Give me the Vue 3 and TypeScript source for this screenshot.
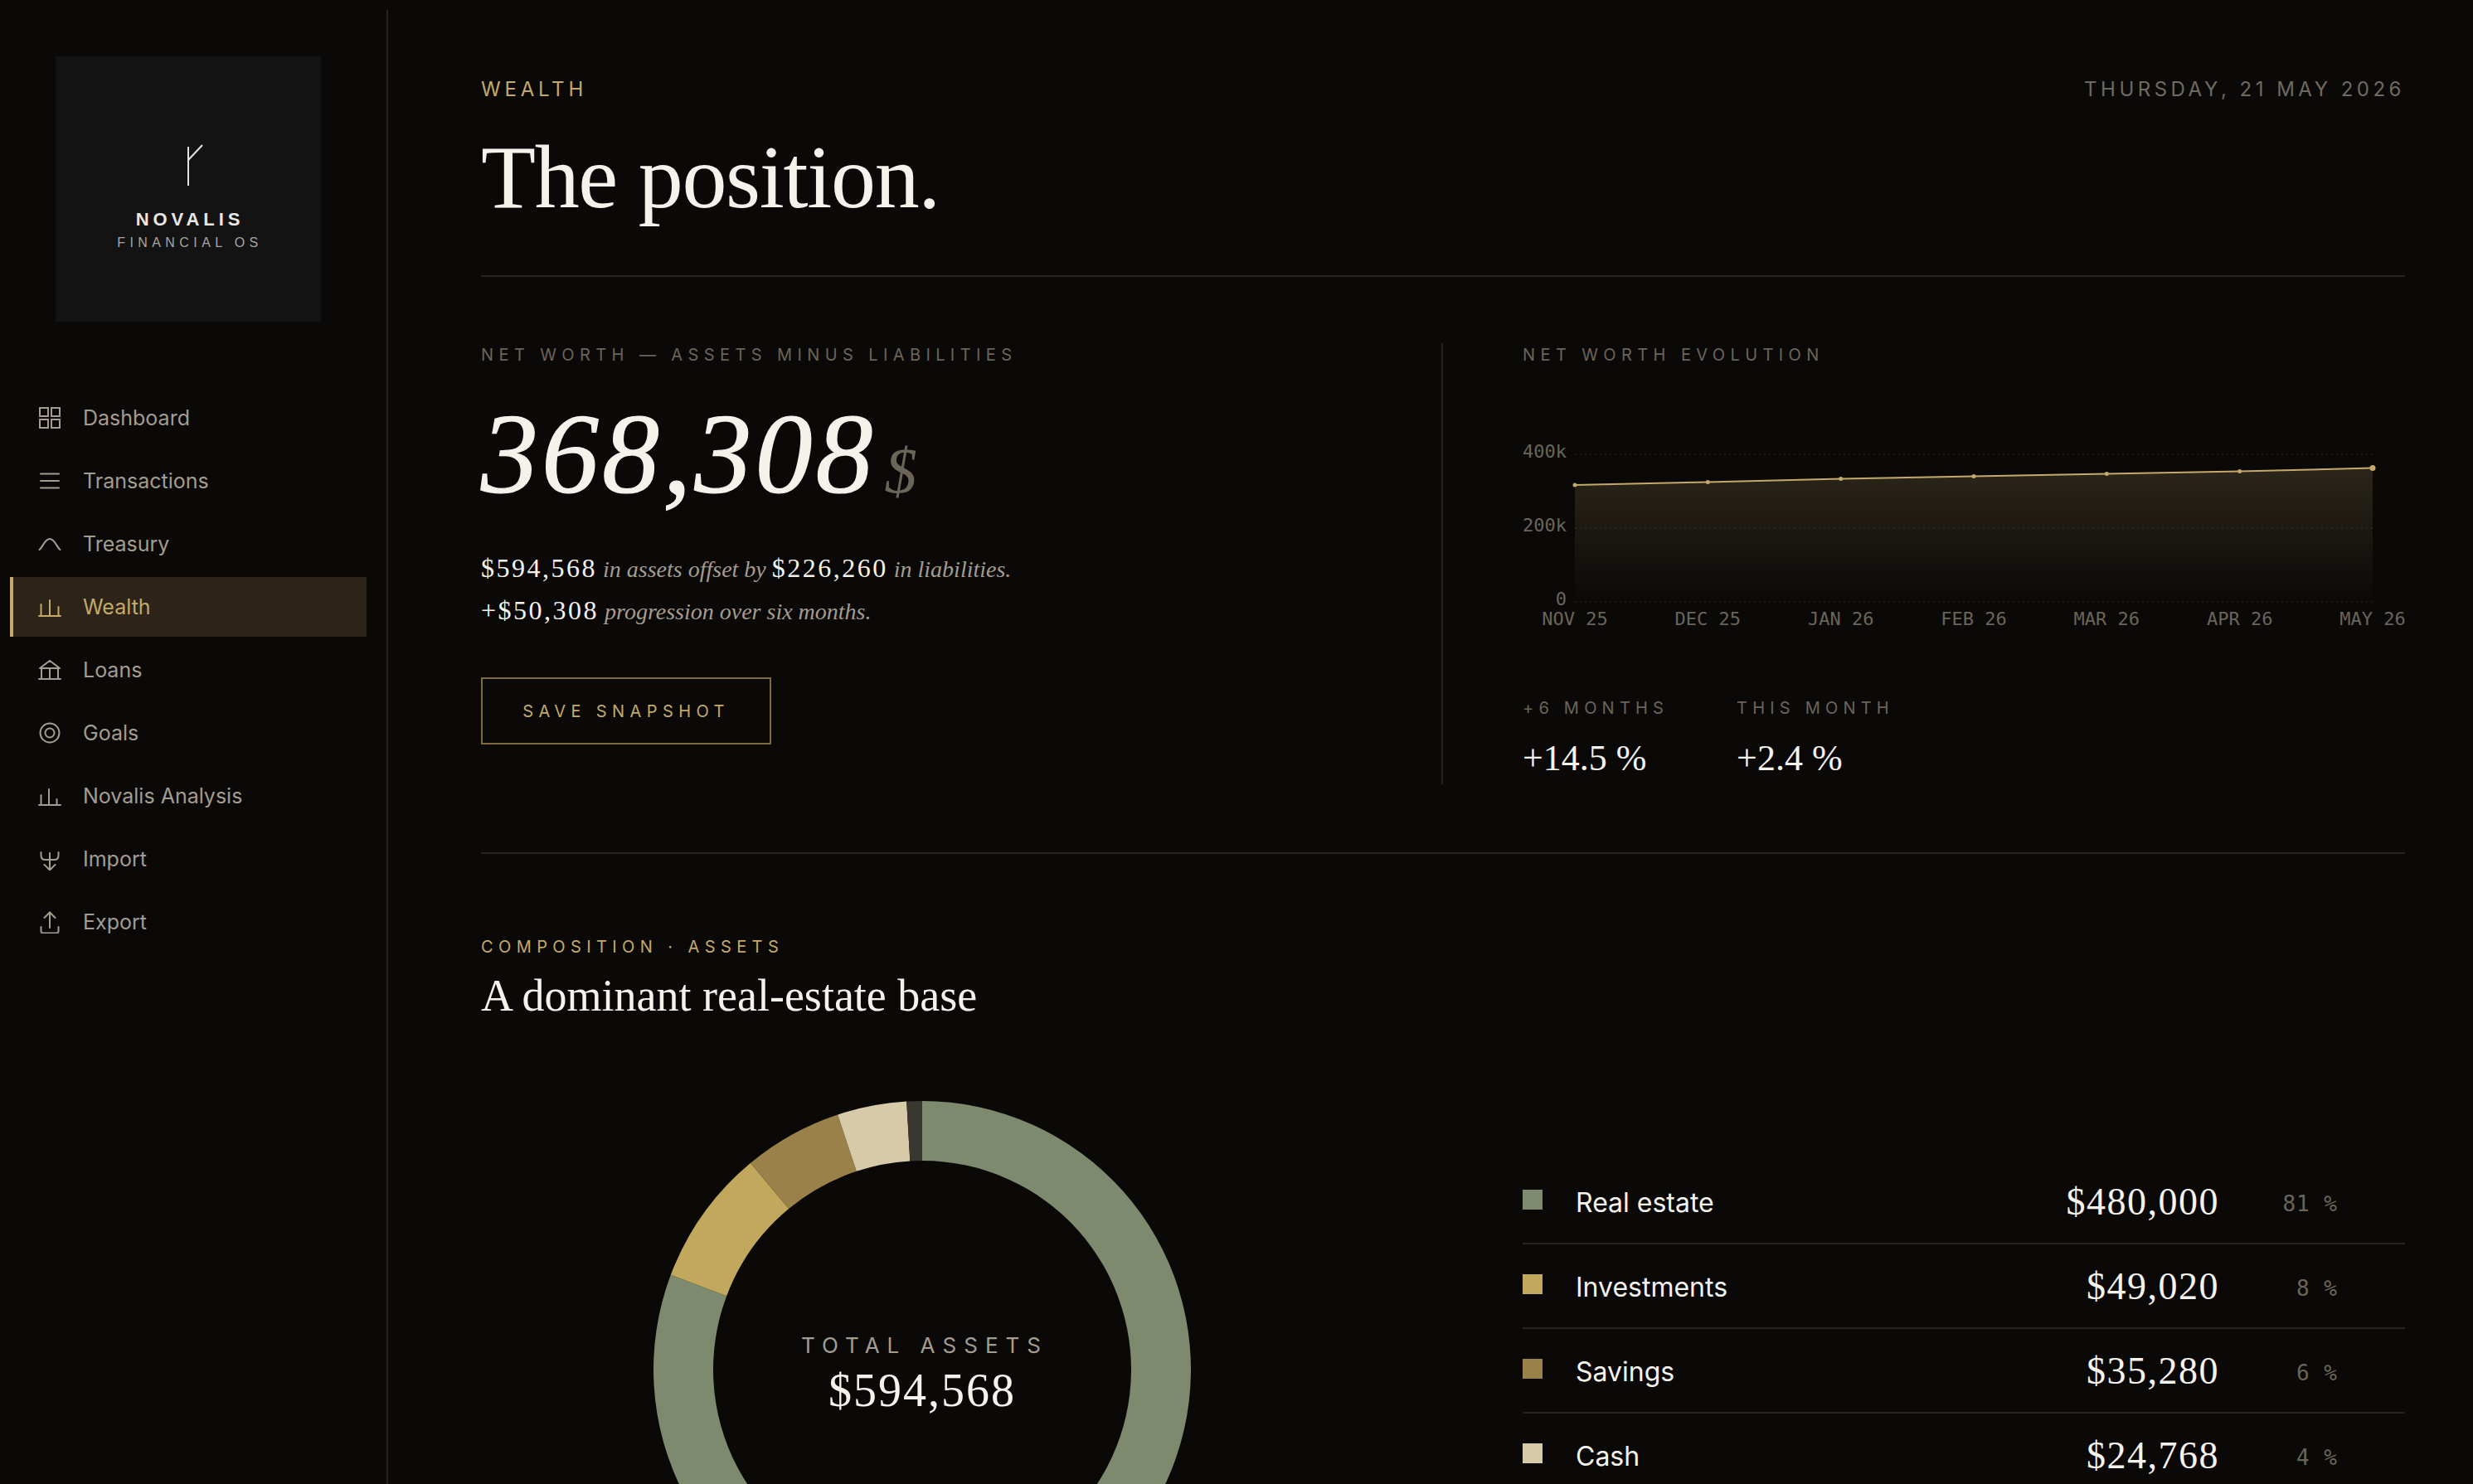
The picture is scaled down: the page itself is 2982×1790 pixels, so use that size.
<template>
  <div class="shell">
    <aside class="sidebar">
      <div class="logo">
        <svg class="logo-mark" width="24" height="52" viewBox="0 0 24 52">
          <path d="M4 3v47M4 19 21 1" fill="none" stroke="#e4e2dd" stroke-width="2" />
        </svg>
        <div class="logo-name">NOVALIS</div>
        <div class="logo-sub">FINANCIAL OS</div>
      </div>
      <nav class="nav">
        <a v-for="item in navItems" :key="item.label" class="nav-item" :class="{ active: item.label === 'Wealth' }">
          <svg class="nav-icon" width="28" height="28" viewBox="0 0 28 28" fill="none" stroke="currentColor" stroke-width="2" stroke-linecap="round">
            <path :d="item.icon" />
          </svg>
          <span>{{ item.label }}</span>
        </a>
      </nav>
    </aside>

    <main class="main">
      <header class="page-head">
        <div class="head-top">
          <span class="eyebrow">WEALTH</span>
          <span class="date">THURSDAY, 21 MAY 2026</span>
        </div>
        <h1 class="title">The position.</h1>
      </header>

      <section class="hero">
        <div class="hero-left">
          <div class="label">NET WORTH — ASSETS MINUS LIABILITIES</div>
          <div class="big-number">368,308<span class="currency">$</span></div>
          <p class="sentence">
            <b>$594,568</b> <i>in assets offset by</i> <b>$226,260</b> <i>in liabilities.</i><br />
            <b>+$50,308</b> <i>progression over six months.</i>
          </p>
          <button class="snapshot">SAVE SNAPSHOT</button>
        </div>
        <div class="hero-right">
          <div class="label">NET WORTH EVOLUTION</div>
          <svg class="chart" width="1064" height="232" viewBox="0 0 1064 232">
            <defs>
              <linearGradient id="area" x1="0" y1="0" x2="0" y2="1">
                <stop offset="0" stop-color="#c4a96a" stop-opacity="0.18" />
                <stop offset="1" stop-color="#c4a96a" stop-opacity="0" />
              </linearGradient>
            </defs>
            <line v-for="y in gridLines" :key="y" x1="63" x2="1025" :y1="y" :y2="y" stroke="#2a2824" stroke-width="1" stroke-dasharray="2 4" />
            <path :d="areaPath" fill="url(#area)" />
            <polyline :points="linePoints" fill="none" stroke="#c4a96a" stroke-width="2" />
            <circle v-for="(p, i) in points" :key="p.label" :cx="p.x" :cy="p.y" :r="i === points.length - 1 ? 3.5 : 2.5" fill="#c4a96a" />
            <text v-for="t in yTicks" :key="t.label" class="tick" x="53" :y="t.y" text-anchor="end">{{ t.label }}</text>
            <text v-for="p in points" :key="p.label + 'x'" class="tick" :x="p.x" y="224" text-anchor="middle">{{ p.label }}</text>
          </svg>
          <div class="stats">
            <div class="stat">
              <div class="stat-label">+6 MONTHS</div>
              <div class="stat-value">+14.5 %</div>
            </div>
            <div class="stat">
              <div class="stat-label">THIS MONTH</div>
              <div class="stat-value">+2.4 %</div>
            </div>
          </div>
        </div>
      </section>

      <section class="composition">
        <div class="eyebrow small">COMPOSITION · ASSETS</div>
        <h2 class="subtitle">A dominant real-estate base</h2>
        <div class="comp-body">
          <div class="donut-wrap">
            <svg width="648" height="648" viewBox="0 0 648 648">
              <path v-for="s in donutSegments" :key="s.label" :d="s.path" :fill="s.color" />
            </svg>
            <div class="donut-center">
              <div class="donut-label">TOTAL ASSETS</div>
              <div class="donut-value">$594,568</div>
            </div>
          </div>
          <ul class="legend">
            <li v-for="r in assets" :key="r.label" class="legend-row">
              <span class="swatch" :style="{ background: r.color }"></span>
              <span class="legend-name">{{ r.label }}</span>
              <span class="legend-amount">{{ r.amount }}</span>
              <span class="legend-pct">{{ r.pct }} %</span>
            </li>
          </ul>
        </div>
      </section>
    </main>
  </div>
</template>

<script setup lang="ts">
import { computed } from 'vue'

const navItems = [
  { label: 'Dashboard', icon: 'M2 2h10v10H2zM16 2h10v10H16zM2 16h10v10H2zM16 16h10v10H16z' },
  { label: 'Transactions', icon: 'M3 5.5h22M3 14h22M3 22.5h22' },
  { label: 'Treasury', icon: 'M1.5 21C5 19 8 8 14 8s9 11 12.5 13' },
  { label: 'Wealth', icon: 'M1 25h26M3.5 25V11M14 25V6M24.5 25V14' },
  { label: 'Loans', icon: 'M1 25h26M2 12 14 3l12 9M2 12h24M4 12v13M14 12v13M24 12v13' },
  { label: 'Goals', icon: 'M14 2.5a11.5 11.5 0 1 0 0 23 11.5 11.5 0 0 0 0-23ZM14 8.5a5.5 5.5 0 1 0 0 11 5.5 5.5 0 0 0 0-11Z' },
  { label: 'Novalis Analysis', icon: 'M1 25h26M3.5 25V13M13 25V6M22.5 25V18' },
  { label: 'Import', icon: 'M3.5 6v4c0 3 2 5 5 5h11c3 0 5-2 5-5V6M14 7v20M7.5 21l6.5 6.5 6.5-6.5' },
  { label: 'Export', icon: 'M14 21V2.5M7.5 9 14 2.5 20.5 9M3.5 20v5c0 1.5 1 2.5 2.5 2.5h16c1.5 0 2.5-1 2.5-2.5v-5' },
]

const months = ['NOV 25', 'DEC 25', 'JAN 26', 'FEB 26', 'MAR 26', 'APR 26', 'MAY 26']
const ys = [55, 51.5, 47.5, 44.5, 41.5, 38.6, 34.5]
const points = months.map((label, i) => ({ label, x: 63 + (i * 962) / 6, y: ys[i] }))
const linePoints = computed(() => points.map((p) => `${p.x},${p.y}`).join(' '))
const areaPath = computed(() => `M63,196 L${points.map((p) => `${p.x},${p.y}`).join(' L')} L1025,196 Z`)
const gridLines = [18, 107, 196]
const yTicks = [
  { label: '400k', y: 22 },
  { label: '200k', y: 111 },
  { label: '0', y: 200 },
]

const assets = [
  { label: 'Real estate', amount: '$480,000', pct: 81, value: 480000, color: '#7d8a6e' },
  { label: 'Investments', amount: '$49,020', pct: 8, value: 49020, color: '#c2a85c' },
  { label: 'Savings', amount: '$35,280', pct: 6, value: 35280, color: '#9a8049' },
  { label: 'Cash', amount: '$24,768', pct: 4, value: 24768, color: '#d6caa8' },
  { label: 'Other', amount: '$5,500', pct: 1, value: 5500, color: '#3a3630' },
]

// ring segments, clockwise from the top
const donutSegments = computed(() => {
  const total = assets.reduce((sum, a) => sum + a.value, 0)
  const at = (r: number, deg: number) => {
    const a = (deg * Math.PI) / 180
    return `${(324 + r * Math.sin(a)).toFixed(2)} ${(324 - r * Math.cos(a)).toFixed(2)}`
  }
  let start = 0
  return assets.map((a) => {
    const end = start + (a.value / total) * 360
    const big = end - start > 180 ? 1 : 0
    const path = `M${at(324, start)} A324 324 0 ${big} 1 ${at(324, end)} L${at(252, end)} A252 252 0 ${big} 0 ${at(252, start)} Z`
    start = end
    return { label: a.label, color: a.color, path }
  })
})
</script>

<style>
html,
body {
  margin: 0;
  background: #0a0908;
}
</style>

<style scoped>
.shell {
  display: flex;
  height: 1790px;
  overflow: hidden;
  background: #0a0908;
  font-family: Inter, 'Liberation Sans', sans-serif;
  color: #f5f2ec;
}

.sidebar {
  width: 468px;
  flex: none;
  box-sizing: border-box;
  margin-top: 12px;
  border-right: 2px solid #24231f;
  padding: 56px 24px 0 12px;
}

.logo {
  width: 320px;
  height: 320px;
  margin-left: 55px;
  background: #131313;
  display: flex;
  flex-direction: column;
  align-items: center;
  font-family: 'Liberation Sans', sans-serif;
}

.logo-mark {
  margin-top: 106px;
  margin-left: 16px;
}

.logo-name {
  margin-top: 26px;
  margin-left: 4px;
  font-size: 22px;
  font-weight: 700;
  letter-spacing: 4.9px;
  color: #e9e7e3;
  line-height: 26px;
}

.logo-sub {
  margin-top: 4px;
  margin-left: 4px;
  font-size: 16px;
  letter-spacing: 5.4px;
  color: #a5a5a3;
  line-height: 22px;
}

.nav {
  margin-top: 80px;
  display: flex;
  flex-direction: column;
  gap: 4px;
}

.nav-item {
  height: 72px;
  display: flex;
  align-items: center;
  gap: 26px;
  padding-left: 34px;
  font-size: 25px;
  color: #a39c8f;
}

.nav-item.active {
  background: #2c2419;
  box-shadow: inset 4px 0 0 #c4a96a;
  color: #c4a96a;
}

.nav-icon {
  flex: none;
}

.main {
  flex: 1;
  min-width: 0;
  padding: 0 82px 0 112px;
}

.page-head {
  height: 334px;
  box-sizing: border-box;
  padding-top: 92px;
  border-bottom: 2px solid #24231f;
}

.head-top {
  display: flex;
  justify-content: space-between;
  align-items: center;
  height: 30px;
}

.eyebrow {
  font-size: 24px;
  letter-spacing: 0.2em;
  color: #c4a96a;
}

.date {
  font-size: 24px;
  letter-spacing: 4.5px;
  color: #6f6a5f;
}

.title {
  margin: 32px 0 0;
  font-family: 'Liberation Serif', serif;
  font-weight: 400;
  font-size: 108px;
  line-height: 120px;
  letter-spacing: -1.3px;
  color: #f5f2ec;
}

.hero {
  display: flex;
  height: 696px;
  box-sizing: border-box;
  padding-top: 80px;
  border-bottom: 2px solid #24231f;
}

.hero-left {
  width: 1160px;
  height: 532px;
  box-sizing: border-box;
  border-right: 2px solid #24231f;
}

.hero-right {
  margin-left: 96px;
  flex: 1;
  min-width: 0;
}

.label {
  font-size: 20px;
  line-height: 28px;
  letter-spacing: 6.4px;
  color: #6b6558;
}

.big-number {
  margin-top: 31px;
  height: 150px;
  font-family: 'Liberation Serif', serif;
  font-style: italic;
  font-size: 138px;
  line-height: 150px;
  letter-spacing: 4px;
  color: #f5f2ec;
  -webkit-text-stroke: 1.2px #f5f2ec;
}

.currency {
  margin-left: 10px;
  font-size: 78px;
  line-height: 1;
  letter-spacing: 0;
  color: #6b6558;
  -webkit-text-stroke: 0;
}

.sentence {
  margin: 38px 0 0;
  font-family: 'Liberation Serif', serif;
  font-size: 28px;
  line-height: 51px;
  color: #a39c8f;
}

.sentence b {
  font-weight: 400;
  font-size: 32px;
  line-height: 1;
  letter-spacing: 2.5px;
  color: #f5f2ec;
}

.snapshot {
  display: block;
  margin-top: 54px;
  width: 350px;
  height: 81px;
  background: none;
  border: 2px solid #7d6a3f;
  font-family: Inter, sans-serif;
  font-size: 20px;
  letter-spacing: 6.4px;
  color: #c4a96a;
  padding: 0;
}

.chart {
  display: block;
  margin-top: 88px;
}

.tick {
  font-family: 'DejaVu Sans Mono', monospace;
  font-size: 22px;
  fill: #6b6558;
}

.stats {
  display: flex;
  gap: 82px;
  margin-top: 78px;
}

.stat-label {
  font-size: 20px;
  line-height: 28px;
  letter-spacing: 6.2px;
  color: #6b6558;
}

.stat-value {
  margin-top: 20px;
  font-family: 'Liberation Serif', serif;
  font-size: 44px;
  line-height: 54px;
  color: #f5f2ec;
}

.composition {
  padding-top: 98px;
}

.eyebrow.small {
  font-size: 20px;
  line-height: 28px;
  letter-spacing: 6.4px;
}

.subtitle {
  margin: 12px 0 0;
  font-family: 'Liberation Serif', serif;
  font-weight: 400;
  font-size: 54px;
  line-height: 66px;
  color: #f5f2ec;
}

.comp-body {
  display: flex;
  margin-top: 94px;
}

.donut-wrap {
  position: relative;
  flex: none;
  width: 648px;
  height: 648px;
  margin-left: 208px;
}

.donut-center {
  position: absolute;
  inset: 0;
  padding-top: 12px;
  display: flex;
  flex-direction: column;
  align-items: center;
  justify-content: center;
  text-align: center;
}

.donut-label {
  margin-left: 6px;
  font-size: 26px;
  line-height: 32px;
  letter-spacing: 9px;
  color: #a39c8f;
}

.donut-value {
  margin-top: 6px;
  font-family: 'Liberation Serif', serif;
  font-size: 56px;
  line-height: 64px;
  letter-spacing: 2px;
  color: #f5f2ec;
}

.legend {
  list-style: none;
  margin: 71px 0 0 400px;
  padding: 0;
  flex: 1;
  min-width: 0;
}

.legend-row {
  display: flex;
  align-items: center;
  height: 100px;
  border-bottom: 2px solid #24231f;
}

.swatch {
  width: 24px;
  height: 24px;
  flex: none;
  margin-right: 40px;
  margin-top: -4px;
}

.legend-name {
  flex: 1;
  margin-top: 2px;
  font-size: 32px;
  color: #f5f2ec;
}

.legend-amount {
  font-family: 'Liberation Serif', serif;
  font-size: 46px;
  letter-spacing: 1.5px;
  color: #f5f2ec;
}

.legend-pct {
  width: 143px;
  flex: none;
  margin-right: 81px;
  margin-top: 6px;
  text-align: right;
  font-family: 'DejaVu Sans Mono', monospace;
  font-size: 26px;
  letter-spacing: 1px;
  color: #6b6558;
}
</style>
